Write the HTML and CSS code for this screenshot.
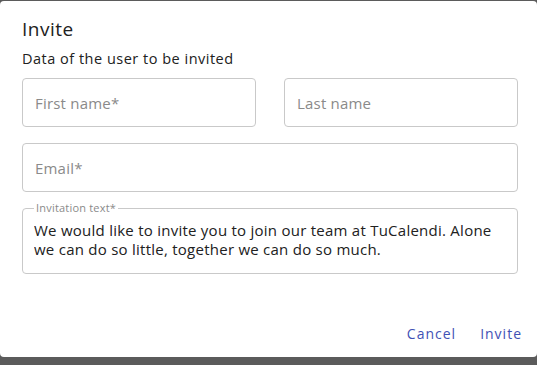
FILE: index.html
```html
<!DOCTYPE html>
<html lang="en">
<head>
  <meta charset="UTF-8">
  <title>Invite</title>
  <link rel="stylesheet" href="styles.css">
</head>
<body>

  <!-- INVITE DIALOG -->
  <div class="dialog">
    <h2 class="dialog-title">Invite</h2>
    <p class="section-title">Data of the user to be invited</p>

    <div class="row">
      <div class="field">
        <input class="input" type="text" placeholder="First name*">
      </div>
      <div class="field">
        <input class="input" type="text" placeholder="Last name">
      </div>
    </div>

    <div class="field field-last">
      <input class="input" type="email" placeholder="Email*">
    </div>

    <fieldset class="outlined">
      <legend>Invitation text*</legend>
      <textarea class="textarea" rows="2">We would like to invite you to join our team at TuCalendi. Alone we can do so little, together we can do so much.</textarea>
    </fieldset>

    <div class="actions">
      <button class="btn">Cancel</button>
      <button class="btn">Invite</button>
    </div>
  </div>

</body>
</html>
```

FILE: styles.css
```css
html, body {
  margin: 0;
  padding: 0;
  height: 100%;
  background: #5b5b5b;
  font-family: 'Open Sans', sans-serif;
  color: #212121;
}

.dialog {
  margin-top: 1px;
  height: 356px;
  box-sizing: border-box;
  background: #fff;
  border-radius: 4px;
  padding: 16px 19px 0 22px;
  display: flex;
  flex-direction: column;
}

.dialog-title {
  margin: 0;
  font-size: 19px;
  font-weight: 400;
  line-height: 24px;
  letter-spacing: 0.5px;
}

.section-title {
  margin: 9px 0 10px;
  font-size: 14.5px;
  font-weight: 500;
  line-height: 18px;
  letter-spacing: 0.5px;
}

.row {
  display: flex;
  gap: 28px;
}

.row .field {
  flex: 1;
}

.field {
  margin-bottom: 16px;
}

.field-last {
  margin-bottom: 10px;
}

.input {
  display: block;
  width: 100%;
  box-sizing: border-box;
  height: 49px;
  border: 1px solid #c9c9c9;
  border-radius: 4px;
  padding: 0 12px;
  font-family: inherit;
  font-size: 15px;
  letter-spacing: 0.2px;
  color: #212121;
  outline: none;
}

.input::placeholder {
  color: #8a8a8a;
}

.outlined {
  margin: 0;
  padding: 0 11px 4px;
  border: 1px solid #c9c9c9;
  border-radius: 4px;
  height: 72px;
  box-sizing: border-box;
}

.outlined legend {
  padding: 0 2px;
  font-size: 11px;
  color: #8a8a8a;
  line-height: 12px;
  letter-spacing: 0.2px;
}

.textarea {
  display: block;
  width: 100%;
  border: none;
  resize: none;
  outline: none;
  padding: 7px 0 0;
  font-family: inherit;
  font-size: 15px;
  line-height: 19px;
  letter-spacing: 0.25px;
  color: #212121;
  overflow: hidden;
}

.actions {
  margin-top: auto;
  margin-bottom: 8px;
  margin-right: -12px;
  display: flex;
  justify-content: flex-end;
  gap: 8px;
}

.btn {
  background: none;
  border: none;
  padding: 6px 8px;
  font-family: inherit;
  font-size: 14px;
  font-weight: 500;
  letter-spacing: 1px;
  color: #3f51b5;
  cursor: pointer;
}
```
